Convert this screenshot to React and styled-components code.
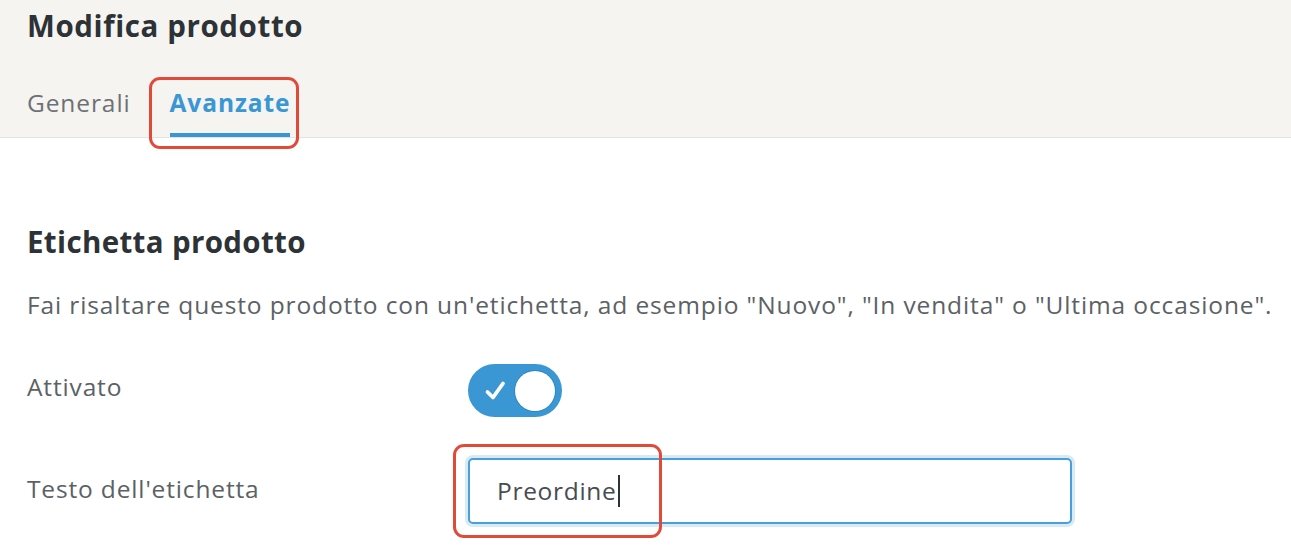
import React from "react";
import styled, { createGlobalStyle } from "styled-components";

const Global = createGlobalStyle`
  html, body { margin: 0; padding: 0; background: #ffffff; }
  body { font-family: "Open Sans", "Lato", sans-serif; -webkit-font-smoothing: antialiased; }
`;

const Page = styled.div`
  width: 1291px;
  height: 557px;
  overflow: hidden;
  display: flex;
  flex-direction: column;
`;

const Header = styled.header`
  background: #f5f4f0;
  border-bottom: 1px solid #e2e3e3;
  padding: 8px 27px 0;
  display: flex;
  flex-direction: column;
`;

const Title = styled.h1`
  margin: 0;
  font-size: 29.5px;
  line-height: 36px;
  letter-spacing: 0.6px;
  font-weight: 700;
  color: #2c3236;
`;

const Tabs = styled.nav`
  margin-top: 40px;
  display: flex;
  gap: 39px;
`;

const TabWrap = styled.div`
  position: relative;
`;

const Tab = styled.div`
  font-size: 24.5px;
  line-height: 30px;
  letter-spacing: 0.9px;
  padding: 4px 0 15px;
  font-weight: ${(p) => (p.$active ? 700 : 400)};
  color: ${(p) => (p.$active ? "#3a97d4" : "#6d7175")};
  border-bottom: 4px solid ${(p) => (p.$active ? "#3a97d4" : "transparent")};
`;

const Highlight = styled.div`
  position: absolute;
  left: ${(p) => p.$l}px;
  top: ${(p) => p.$t}px;
  width: ${(p) => p.$w}px;
  height: ${(p) => p.$h}px;
  border: 3px solid #e04b39;
  border-radius: 11px;
  box-sizing: border-box;
  pointer-events: none;
`;

const Content = styled.main`
  padding: 85.5px 27px 0;
  display: flex;
  flex-direction: column;
`;

const SectionTitle = styled.h2`
  margin: 0;
  font-size: 29.5px;
  line-height: 36px;
  letter-spacing: 0.35px;
  font-weight: 700;
  color: #2c3236;
`;

const Description = styled.p`
  margin: 30px 0 0;
  font-size: 24.5px;
  line-height: 30px;
  letter-spacing: 0.88px;
  color: #5c6166;
  white-space: nowrap;
`;

const FormRow = styled.div`
  display: grid;
  grid-template-columns: 441px 1fr;
  align-items: start;
  margin-top: ${(p) => p.$mt}px;
`;

const Label = styled.label`
  margin-top: ${(p) => p.$offset}px;
  font-size: 24.5px;
  line-height: 30px;
  letter-spacing: 0.85px;
  color: #5c6166;
`;

const Toggle = styled.div`
  width: 94px;
  height: 53px;
  border-radius: 27px;
  background: #3a97d4;
  display: flex;
  align-items: center;
  justify-content: space-between;
  padding: 0 7px 0 15px;
  box-sizing: border-box;
`;

const Knob = styled.div`
  width: 40px;
  height: 40px;
  border-radius: 50%;
  background: #ffffff;
  box-shadow: 0 0 0 1px #2f86c2;
`;

const FieldHolder = styled.div`
  position: relative;
  width: 604px;
`;

const Field = styled.div`
  height: 66px;
  box-sizing: border-box;
  border: 2px solid #4a9fd8;
  border-radius: 5px;
  box-shadow: 0 0 0 3px rgba(74, 159, 216, 0.22);
  display: flex;
  align-items: center;
  padding-left: 27px;
  font-size: 24.5px;
  line-height: 30px;
  letter-spacing: 0.7px;
  color: #474c51;
  background: #fff;
`;

const Caret = styled.span`
  display: inline-block;
  width: 2px;
  height: 32px;
  background: #2c3236;
  margin-left: 1px;
`;

export default function App() {
  return (
    <Page>
      <Global />
      <Header>
        <Title>Modifica prodotto</Title>
        <Tabs>
          <Tab>Generali</Tab>
          <TabWrap>
            <Tab $active>Avanzate</Tab>
            <Highlight $l={-21} $t={-7} $w={150} $h={72} />
          </TabWrap>
        </Tabs>
      </Header>
      <Content>
        <SectionTitle>Etichetta prodotto</SectionTitle>
        <Description>
          Fai risaltare questo prodotto con un'etichetta, ad esempio "Nuovo", "In vendita" o "Ultima occasione".
        </Description>
        <FormRow $mt={44.5}>
          <Label $offset={7.5}>Attivato</Label>
          <Toggle>
            <svg width="24" height="22" viewBox="0 0 24 22">
              <path d="M4.5 12 L10 17.5 L20 3.5" fill="none" stroke="#fff" strokeWidth="3.8" strokeLinecap="round" strokeLinejoin="round" />
            </svg>
            <Knob />
          </Toggle>
        </FormRow>
        <FormRow $mt={41}>
          <Label $offset={15.5}>Testo dell'etichetta</Label>
          <FieldHolder>
            <Field>
              Preordine<Caret />
            </Field>
            <Highlight $l={-15} $t={-14} $w={209} $h={94} />
          </FieldHolder>
        </FormRow>
      </Content>
    </Page>
  );
}
